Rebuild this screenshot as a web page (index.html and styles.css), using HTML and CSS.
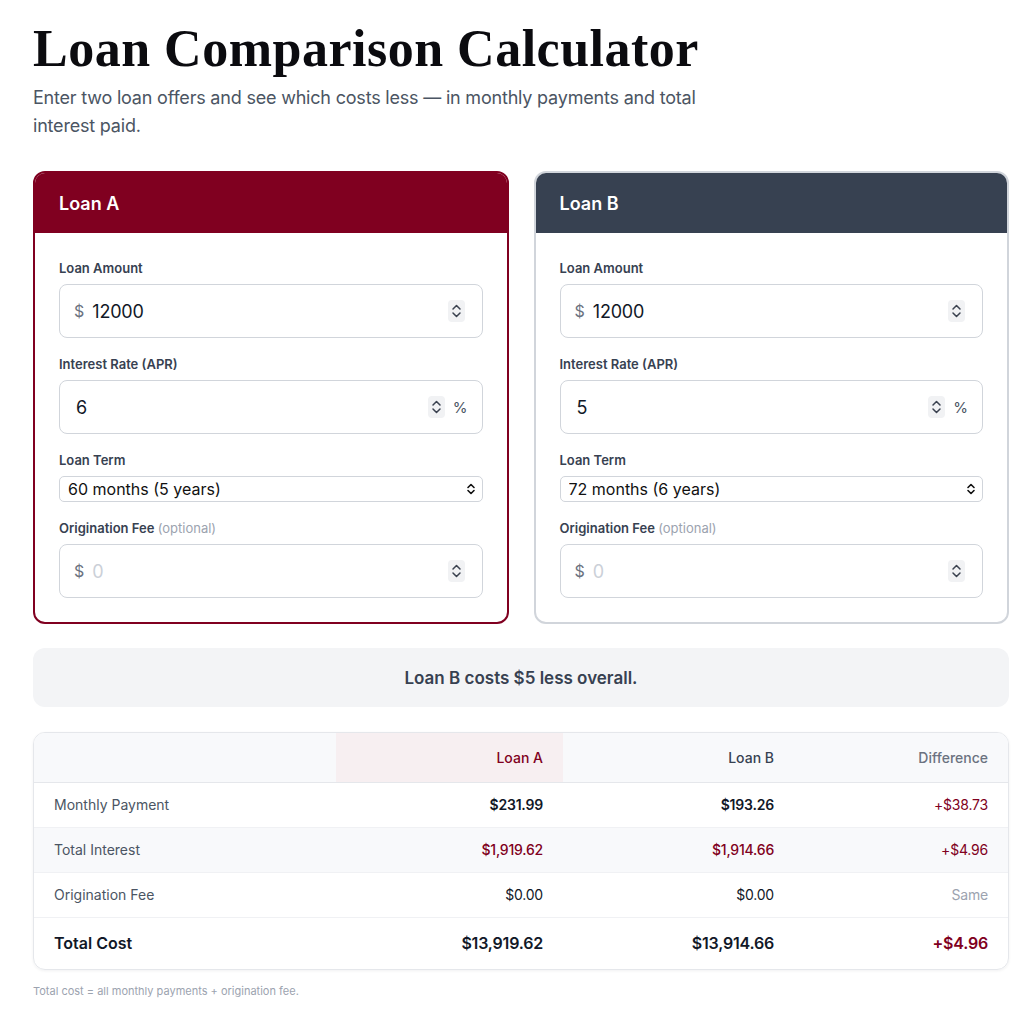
FILE: index.html
```html
<!DOCTYPE html>
<html lang="en">
<head>
<meta charset="utf-8">
<title>Loan Comparison Calculator</title>
<link rel="stylesheet" href="styles.css">
</head>
<body>
<main class="page">
  <h1 class="title">Loan Comparison Calculator</h1>
  <p class="subtitle">Enter two loan offers and see which costs less — in monthly payments and total interest paid.</p>

  <div class="loans">
    <section class="loan loan-a">
      <header class="loan-head">Loan A</header>
      <div class="loan-body">
        <div class="field">
          <label class="label">Loan Amount</label>
          <div class="input-box">
            <span class="prefix">$</span>
            <input class="num" type="text" value="12000">
            <svg class="spin" width="17" height="22" viewBox="0 0 17 22"><rect width="17" height="22" rx="4" fill="#f1f2f4"/><path d="M5 9 L8.5 5.5 L12 9" fill="none" stroke="#3b4250" stroke-width="1.5" stroke-linecap="round" stroke-linejoin="round"/><path d="M5 13 L8.5 16.5 L12 13" fill="none" stroke="#3b4250" stroke-width="1.5" stroke-linecap="round" stroke-linejoin="round"/></svg>
          </div>
        </div>
        <div class="field">
          <label class="label">Interest Rate (APR)</label>
          <div class="input-box plain">
            <input class="num" type="text" value="6">
            <svg class="spin" width="17" height="22" viewBox="0 0 17 22"><rect width="17" height="22" rx="4" fill="#f1f2f4"/><path d="M5 9 L8.5 5.5 L12 9" fill="none" stroke="#3b4250" stroke-width="1.5" stroke-linecap="round" stroke-linejoin="round"/><path d="M5 13 L8.5 16.5 L12 13" fill="none" stroke="#3b4250" stroke-width="1.5" stroke-linecap="round" stroke-linejoin="round"/></svg>
            <span class="suffix">%</span>
          </div>
        </div>
        <div class="field">
          <label class="label">Loan Term</label>
          <div class="select-box">
            <select class="select"><option>60 months (5 years)</option></select>
            <svg class="select-icon" width="10" height="12" viewBox="0 0 10 12"><path d="M2 4.5 L5 1.5 L8 4.5" fill="none" stroke="#111" stroke-width="1.6" stroke-linecap="round" stroke-linejoin="round"/><path d="M2 7.5 L5 10.5 L8 7.5" fill="none" stroke="#111" stroke-width="1.6" stroke-linecap="round" stroke-linejoin="round"/></svg>
          </div>
        </div>
        <div class="field last">
          <label class="label">Origination Fee <span class="opt">(optional)</span></label>
          <div class="input-box">
            <span class="prefix">$</span>
            <input class="num" type="text" placeholder="0">
            <svg class="spin" width="17" height="22" viewBox="0 0 17 22"><rect width="17" height="22" rx="4" fill="#f1f2f4"/><path d="M5 9 L8.5 5.5 L12 9" fill="none" stroke="#3b4250" stroke-width="1.5" stroke-linecap="round" stroke-linejoin="round"/><path d="M5 13 L8.5 16.5 L12 13" fill="none" stroke="#3b4250" stroke-width="1.5" stroke-linecap="round" stroke-linejoin="round"/></svg>
          </div>
        </div>
      </div>
    </section>

    <section class="loan loan-b">
      <header class="loan-head">Loan B</header>
      <div class="loan-body">
        <div class="field">
          <label class="label">Loan Amount</label>
          <div class="input-box">
            <span class="prefix">$</span>
            <input class="num" type="text" value="12000">
            <svg class="spin" width="17" height="22" viewBox="0 0 17 22"><rect width="17" height="22" rx="4" fill="#f1f2f4"/><path d="M5 9 L8.5 5.5 L12 9" fill="none" stroke="#3b4250" stroke-width="1.5" stroke-linecap="round" stroke-linejoin="round"/><path d="M5 13 L8.5 16.5 L12 13" fill="none" stroke="#3b4250" stroke-width="1.5" stroke-linecap="round" stroke-linejoin="round"/></svg>
          </div>
        </div>
        <div class="field">
          <label class="label">Interest Rate (APR)</label>
          <div class="input-box plain">
            <input class="num" type="text" value="5">
            <svg class="spin" width="17" height="22" viewBox="0 0 17 22"><rect width="17" height="22" rx="4" fill="#f1f2f4"/><path d="M5 9 L8.5 5.5 L12 9" fill="none" stroke="#3b4250" stroke-width="1.5" stroke-linecap="round" stroke-linejoin="round"/><path d="M5 13 L8.5 16.5 L12 13" fill="none" stroke="#3b4250" stroke-width="1.5" stroke-linecap="round" stroke-linejoin="round"/></svg>
            <span class="suffix">%</span>
          </div>
        </div>
        <div class="field">
          <label class="label">Loan Term</label>
          <div class="select-box">
            <select class="select"><option>72 months (6 years)</option></select>
            <svg class="select-icon" width="10" height="12" viewBox="0 0 10 12"><path d="M2 4.5 L5 1.5 L8 4.5" fill="none" stroke="#111" stroke-width="1.6" stroke-linecap="round" stroke-linejoin="round"/><path d="M2 7.5 L5 10.5 L8 7.5" fill="none" stroke="#111" stroke-width="1.6" stroke-linecap="round" stroke-linejoin="round"/></svg>
          </div>
        </div>
        <div class="field last">
          <label class="label">Origination Fee <span class="opt">(optional)</span></label>
          <div class="input-box">
            <span class="prefix">$</span>
            <input class="num" type="text" placeholder="0">
            <svg class="spin" width="17" height="22" viewBox="0 0 17 22"><rect width="17" height="22" rx="4" fill="#f1f2f4"/><path d="M5 9 L8.5 5.5 L12 9" fill="none" stroke="#3b4250" stroke-width="1.5" stroke-linecap="round" stroke-linejoin="round"/><path d="M5 13 L8.5 16.5 L12 13" fill="none" stroke="#3b4250" stroke-width="1.5" stroke-linecap="round" stroke-linejoin="round"/></svg>
          </div>
        </div>
      </div>
    </section>
  </div>

  <div class="summary">Loan B costs $5 less overall.</div>

  <div class="results">
    <table class="table">
      <colgroup>
        <col class="c1"><col class="c2"><col class="c3"><col class="c4">
      </colgroup>
      <thead>
        <tr class="head-row">
          <th class="th-label"></th>
          <th class="th th-a">Loan A</th>
          <th class="th th-b">Loan B</th>
          <th class="th th-diff">Difference</th>
        </tr>
      </thead>
      <tbody>
        <tr class="row">
          <td class="cell-label">Monthly Payment</td>
          <td class="val strong">$231.99</td>
          <td class="val strong">$193.26</td>
          <td class="val diff">+$38.73</td>
        </tr>
        <tr class="row alt">
          <td class="cell-label">Total Interest</td>
          <td class="val accent">$1,919.62</td>
          <td class="val accent">$1,914.66</td>
          <td class="val diff">+$4.96</td>
        </tr>
        <tr class="row">
          <td class="cell-label">Origination Fee</td>
          <td class="val">$0.00</td>
          <td class="val">$0.00</td>
          <td class="val same">Same</td>
        </tr>
        <tr class="row total">
          <td class="cell-label">Total Cost</td>
          <td class="val">$13,919.62</td>
          <td class="val">$13,914.66</td>
          <td class="val diff">+$4.96</td>
        </tr>
      </tbody>
    </table>
  </div>

  <p class="note">Total cost = all monthly payments + origination fee.</p>
</main>
</body>
</html>
```

FILE: styles.css
```css
* { box-sizing: border-box; }

body {
  margin: 0;
  background: #ffffff;
  font-family: Inter, "Noto Sans", "Liberation Sans", sans-serif;
  color: #111827;
}

.page {
  width: 976px;
  margin-left: 33px;
  padding-top: 19px;
  padding-bottom: 20px;
}

.title {
  margin: 0;
  font-family: "Liberation Serif", "DejaVu Serif", serif;
  font-weight: 700;
  font-size: 52px;
  line-height: 60px;
  color: #0b0b0f;
  letter-spacing: 0.5px;
}

.subtitle {
  margin: 5px 0 0 0;
  max-width: 690px;
  font-size: 18px;
  line-height: 28px;
  color: #4b5563;
  letter-spacing: -0.2px;
}

.loans {
  margin-top: 31px;
  display: grid;
  grid-template-columns: 1fr 1fr;
  gap: 25px;
}

.loan {
  border: 2px solid #d1d5db;
  border-radius: 12px;
  overflow: hidden;
  background: #fff;
}

.loan-a { border-color: #800020; }

.loan-head {
  height: 60px;
  padding: 0 24px;
  display: flex;
  align-items: center;
  font-size: 18px;
  font-weight: 600;
  color: #ffffff;
  background: #374151;
}

.loan-a .loan-head { background: #800020; }

.loan-b .loan-head {
  margin: -2px -2px 0 -2px;
  height: 62px;
  padding-left: 26px;
  padding-top: 2px;
}

.loan-body {
  padding: 26px 24px 24px 24px;
}

.field { margin-bottom: 17px; }
.field.last { margin-bottom: 0; }

.label {
  display: block;
  font-size: 13px;
  line-height: 18px;
  font-weight: 600;
  color: #374151;
  margin-bottom: 7px;
}

.opt {
  font-weight: 400;
  color: #9ca3af;
}

.input-box {
  height: 54px;
  border: 1px solid #d1d5db;
  border-radius: 8px;
  display: flex;
  align-items: center;
  padding: 0 17px 0 14px;
}

.input-box.plain { padding: 0 14px 0 16px; }

.prefix {
  font-size: 16px;
  color: #6b7280;
  margin-right: 8px;
}

.suffix {
  font-size: 15px;
  color: #4b5563;
  margin-left: 8px;
}

.num {
  flex: 1;
  min-width: 0;
  border: 0;
  outline: 0;
  padding: 0;
  background: transparent;
  font-family: inherit;
  font-size: 18px;
  color: #111827;
  letter-spacing: -0.2px;
}

.num::placeholder { color: #cbd0d8; }

.spin { flex: none; display: block; }

.select-box {
  position: relative;
  height: 26px;
}

.select {
  width: 100%;
  height: 26px;
  -webkit-appearance: none;
  appearance: none;
  border: 1px solid #d1d5db;
  border-radius: 5px;
  background: #fff;
  padding: 0 24px 0 8px;
  font-family: inherit;
  font-size: 16px;
  color: #111;
}

.select-icon {
  position: absolute;
  right: 7px;
  top: 7px;
  pointer-events: none;
}

.summary {
  margin-top: 24px;
  height: 59px;
  border-radius: 12px;
  background: #f3f4f6;
  display: flex;
  align-items: center;
  justify-content: center;
  font-size: 17px;
  font-weight: 600;
  color: #374151;
}

.results {
  margin-top: 25px;
  border: 1px solid #e5e7eb;
  border-radius: 12px;
  overflow: hidden;
  box-shadow: 0 1px 3px rgba(17, 24, 39, 0.06);
}

.table {
  width: 100%;
  border-collapse: collapse;
  table-layout: fixed;
  font-size: 14px;
}

.c1 { width: 302px; }
.c2 { width: 227px; }
.c3 { width: 231px; }

.head-row {
  height: 49px;
  background: #f8f9fb;
  border-bottom: 1px solid #e5e7eb;
}

.th {
  text-align: right;
  padding: 0 20px;
  font-weight: 500;
  font-size: 14px;
}

.th-a { background: #f7eff1; color: #800020; }
.th-b { color: #374151; }
.th-diff { color: #6b7280; }

.row {
  height: 45px;
  border-bottom: 1px solid #f0f1f4;
}

.row.alt { background: #f8f9fb; }

.row.total {
  height: 52px;
  border-top: 1px solid #e5e7eb;
  border-bottom: 0;
}

.cell-label {
  padding: 0 20px;
  color: #4b5563;
  font-size: 14px;
}

.val {
  text-align: right;
  padding: 0 20px;
  color: #111827;
  letter-spacing: -0.2px;
}

.val.strong { font-weight: 600; }
.val.accent { color: #800020; font-weight: 500; }
.val.diff { color: #800020; }
.val.same { color: #9ca3af; }

.row.total .cell-label,
.row.total .val {
  font-size: 16px;
  font-weight: 600;
  color: #111827;
}

.row.total .val.diff { color: #800020; }

.note {
  margin: 14px 0 0 0;
  font-size: 11px;
  color: #9ca3af;
}
```
